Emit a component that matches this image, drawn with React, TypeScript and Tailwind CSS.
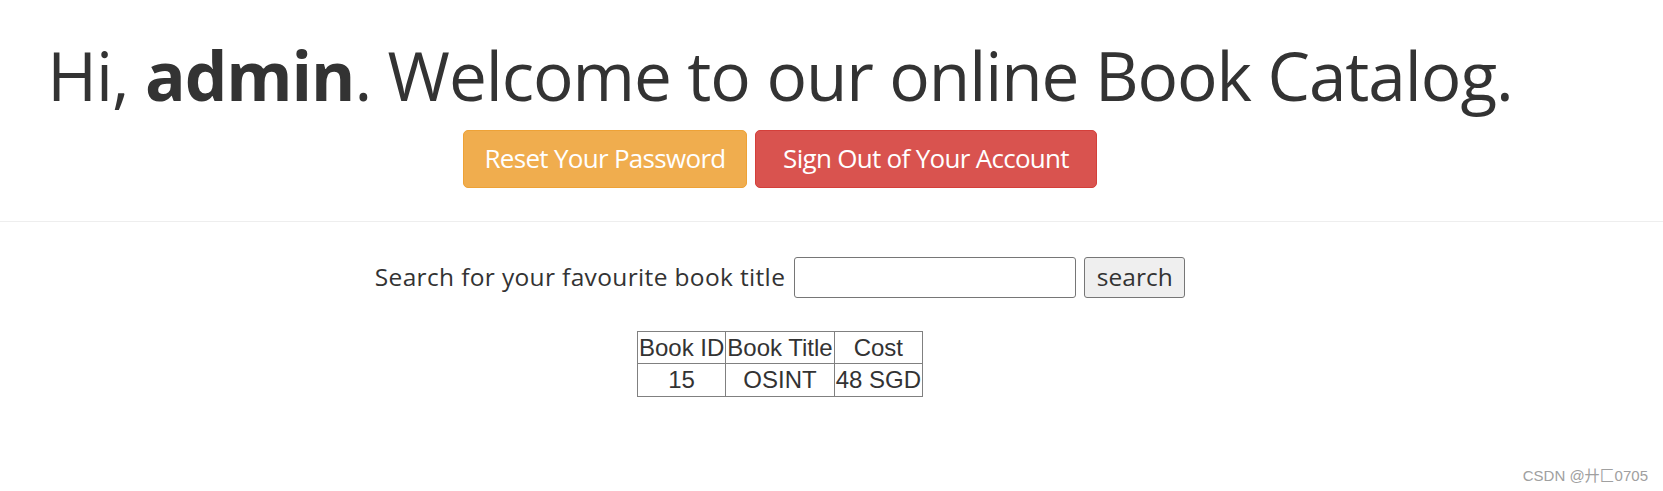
import React from 'react';

const rows = [{ id: 15, title: 'OSINT', cost: '48 SGD' }];

export default function App() {
  return (
    <div className="relative h-[491px] w-full bg-white text-[#333] font-['Open_Sans',sans-serif]">
      {/* Header */}
      <div className="w-[1560px] flex flex-col items-center pt-[42px]">
        <h1 className="text-[67.5px] leading-none font-normal whitespace-nowrap tracking-[-1.05px]">
          Hi, <b className="font-bold">admin</b>. Welcome to our online Book Catalog.
        </h1>
        <div className="flex gap-2 mt-[20px]">
          <a className="h-[58px] w-[284px] flex items-center justify-center rounded-[5px] border border-[#eea236] bg-[#f0ad4e] text-white text-[26px] tracking-[-0.7px]">
            Reset Your Password
          </a>
          <a className="h-[58px] w-[342px] flex items-center justify-center rounded-[5px] border border-[#d43f3a] bg-[#d9534f] text-white text-[26px] tracking-[-0.7px]">
            Sign Out of Your Account
          </a>
        </div>
      </div>

      <div className="mt-[33px] border-t border-[#eee]" />

      {/* Search */}
      <div className="w-[1560px] flex flex-col items-center">
        <form className="flex items-center mt-[35px]" onSubmit={e => e.preventDefault()}>
          <label className="text-[24.5px] leading-none mr-[9px] tracking-[0.35px]">Search for your favourite book title</label>
          <input
            type="text"
            className="h-[41px] w-[282px] rounded-[3px] border border-[#767676] bg-white"
          />
          <button className="ml-2 h-[41px] w-[101px] rounded-[3px] border border-[#767676] bg-[#efefef] text-[24.5px] leading-none">
            search
          </button>
        </form>

        <table className="mt-[33px] border-collapse font-['Liberation_Sans',Arial,sans-serif] text-[24px] leading-[27.5px] text-[#333]">
          <thead>
            <tr>
              <th className="border border-[#808080] px-[1px] py-[2px] font-normal">Book ID</th>
              <th className="border border-[#808080] px-[1px] py-[2px] font-normal">Book Title</th>
              <th className="border border-[#808080] px-[1px] py-[2px] font-normal">Cost</th>
            </tr>
          </thead>
          <tbody>
            {rows.map(r => (
              <tr key={r.id}>
                <td className="border border-[#808080] px-[1px] py-[2px] text-center">{r.id}</td>
                <td className="border border-[#808080] px-[1px] py-[2px] text-center">{r.title}</td>
                <td className="border border-[#808080] px-[1px] py-[2px] text-center">{r.cost}</td>
              </tr>
            ))}
          </tbody>
        </table>
      </div>

      <div className="absolute right-[15px] bottom-[8px] text-[15px] leading-none text-[#a0a0a0] font-['Liberation_Sans','Noto_Sans_CJK_SC',sans-serif]">
        CSDN @廾匚0705
      </div>
    </div>
  );
}
